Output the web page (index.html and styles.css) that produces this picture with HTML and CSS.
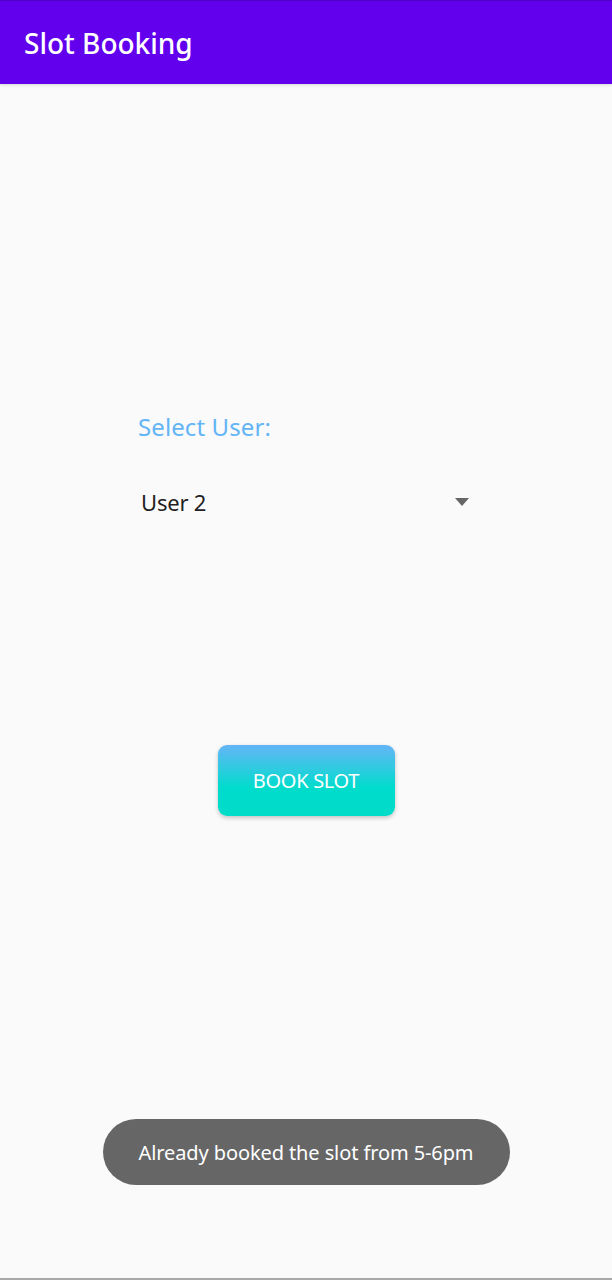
FILE: index.html
```html
<!DOCTYPE html>
<html>
<head>
<meta charset="utf-8">
<link rel="stylesheet" href="styles.css">
</head>
<body>
<div class="app">
  <header class="appbar"><h1 class="title">Slot Booking</h1></header>
  <main class="content">
    <div class="form">
      <label class="label">Select User:</label>
      <div class="spinner">
        <span class="spinner-value">User 2</span>
        <svg class="arrow" width="14" height="8" viewBox="0 0 14 8"><path d="M0 0 L14 0 L7 8 Z" fill="#666"/></svg>
      </div>
    </div>
    <div class="actions">
      <button class="book">BOOK SLOT</button>
    </div>
    <div class="toast-wrap">
      <div class="toast">Already booked the slot from 5-6pm</div>
    </div>
  </main>
</div>
</body>
</html>
```
FILE: styles.css
```css
html, body {
  margin: 0;
  padding: 0;
}
body {
  font-family: "Noto Sans", "Open Sans", sans-serif;
  background: #fafafa;
  width: 612px;
  height: 1280px;
  overflow: hidden;
}
.app {
  display: flex;
  flex-direction: column;
  height: 1280px;
  box-sizing: border-box;
  border-bottom: 2px solid #a8a8a8;
}
.appbar {
  height: 84px;
  background: #6200ee;
  border-top: 1px solid #5000c8;
  box-sizing: border-box;
  display: flex;
  align-items: center;
  padding-left: 24px;
  box-shadow: 0 1px 3px rgba(0,0,0,0.15);
}
.title {
  margin: 0;
  color: #fff;
  font-size: 28px;
  font-weight: 500;
  letter-spacing: 0;
}
.content {
  flex: 1;
  display: flex;
  flex-direction: column;
  align-items: center;
}
.form {
  margin-top: 327px;
  width: 336px;
  display: flex;
  flex-direction: column;
}
.label {
  color: #64b5f6;
  font-size: 24px;
  line-height: 32px;
  height: 32px;
  letter-spacing: 0.1px;
}
.spinner {
  margin-top: 43px;
  display: flex;
  align-items: center;
  justify-content: space-between;
  height: 32px;
  padding-left: 3px;
  padding-right: 5px;
}
.spinner-value {
  color: #212121;
  font-size: 22px;
  letter-spacing: -0.2px;
}
.arrow {
  display: block;
}
.actions {
  margin-top: 227px;
}
.book {
  width: 177px;
  height: 71px;
  border: none;
  border-radius: 9px;
  background: linear-gradient(to bottom, #64b5f6 0%, #2cccdf 35%, #00dccc 60%, #00dcc8 100%);
  color: #fff;
  font-family: inherit;
  font-size: 20px;
  letter-spacing: -0.3px;
  box-shadow: 0 2px 4px rgba(0,0,0,0.22);
}
.toast-wrap {
  margin-top: 303px;
}
.toast {
  width: 407px;
  height: 66px;
  border-radius: 33px;
  background: #666666;
  color: #fff;
  font-size: 20px;
  letter-spacing: -0.1px;
  display: flex;
  align-items: center;
  justify-content: center;
}
```
